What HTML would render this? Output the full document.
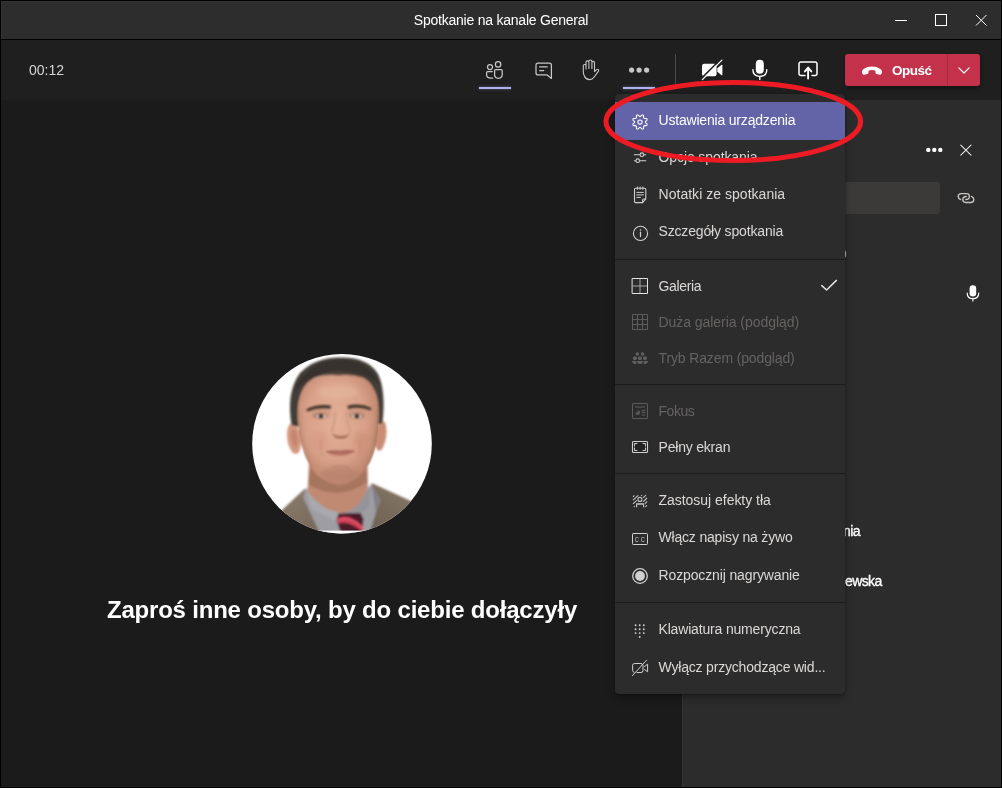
<!DOCTYPE html>
<html lang="pl">
<head>
<meta charset="utf-8">
<title>Spotkanie na kanale General</title>
<style>
*{box-sizing:border-box;margin:0;padding:0}
html,body{width:1002px;height:788px;overflow:hidden;background:#000}
body{font-family:"Liberation Sans",sans-serif;color:#fff;position:relative}
.abs{position:absolute}
#title,#timer,#heading,.mi,.pname,#leave .txt{will-change:transform}
svg{position:absolute;overflow:visible}
#titlebar{left:1px;top:1px;width:1000px;height:38px;background:#2d2d2d;box-shadow:inset 1px 1px 0 #333}
#title{left:0;top:0;width:1000px;height:38px;line-height:38px;text-align:center;font-size:14px;color:#fff;letter-spacing:-0.23px}
#toolbar{left:1px;top:40px;width:1000px;height:60px;background:#1f1f1f}
#main{left:1px;top:100px;width:681px;height:687px;background:#1b1b1b}
#panel{left:682px;top:100px;width:319px;height:687px;background:#2d2c2c;border-left:1px solid #343333}
#timer{left:29px;top:62px;font-size:14px;color:#d6d6d6;line-height:16px}
#heading{left:1px;top:596px;width:682px;text-align:center;font-size:24px;font-weight:bold;line-height:28px;color:#fff;white-space:nowrap;letter-spacing:-0.2px}
.ul{position:absolute;height:2px;top:87px;width:32px;background:#b0b1ea;box-shadow:0 0 3px rgba(150,152,225,.55)}
#vdiv{left:675px;top:54px;width:1px;height:30px;background:#4a4a4a}
#leave{left:845px;top:54px;width:135px;height:32px;background:#c4314b;border-radius:3px;box-shadow:0 2px 4px rgba(0,0,0,.4)}
#leave .split{position:absolute;left:102px;top:0;width:1px;height:32px;background:#a72a40}
#leave .txt{position:absolute;left:47px;top:0;line-height:33px;font-size:13.5px;font-weight:bold;color:#fff;letter-spacing:-0.5px}
#search{left:700px;top:182px;width:240px;height:32px;background:#3b3a39;border-radius:3px}
.pname{position:absolute;font-size:14px;line-height:16px;color:#fff;white-space:nowrap;letter-spacing:-0.6px;-webkit-text-stroke:0.35px #fff}
#menu{left:615px;top:94px;width:230px;height:600px;background:#2d2c2c;border-radius:4px;box-shadow:0 4px 8px -1px rgba(0,0,0,.4),0 0 2px rgba(0,0,0,.35)}
.mi{position:absolute;left:0;width:230px;height:38px;line-height:36px;font-size:14px;color:#dbd9d7;padding-left:43.5px;white-space:nowrap}
.mi.dis{color:#646362}
.mi.sel{background:#6264a7;color:#fff}
.sep{position:absolute;left:0;width:230px;height:1px;background:#1c1c1c}
</style>
</head>
<body>
<div id="titlebar" class="abs"><div id="title" class="abs">Spotkanie na kanale General</div></div>
<div id="toolbar" class="abs"></div>
<div id="main" class="abs"></div>
<div id="panel" class="abs"></div>

<!-- window controls -->
<svg style="left:890px;top:10px" width="105" height="22" viewBox="890 10 105 22" fill="none" stroke="#fff" stroke-width="1">
  <path d="M895 20.5H907"/>
  <rect x="935.5" y="14.5" width="11" height="11"/>
  <path d="M976 15L986.5 25.5M986.5 15L976 25.5"/>
</svg>

<div id="timer" class="abs">00:12</div>


<div id="leave" class="abs"><div class="split"></div><div class="txt">Opuść</div></div>
<!-- toolbar icons -->
<svg style="left:0;top:0" width="1002" height="100" viewBox="0 0 1002 100" fill="none" stroke="#c8c6c4" stroke-width="1.25" stroke-linecap="round" stroke-linejoin="round">
  <!-- people -->
  <circle cx="490" cy="67" r="2.5"/>
  <circle cx="498.1" cy="64.4" r="2.7"/>
  <path d="M492.3 71.6H487.6Q486.6 71.6 486.6 72.6V74.8Q486.6 78.2 491 78.2H492.6"/>
  <path d="M495.6 69.6H501.2Q502.2 69.6 502.2 70.6V74.6Q502.2 78.3 498.4 78.3Q494.6 78.3 494.6 74.6V70.6Q494.6 69.6 495.6 69.6Z"/>
  <!-- chat -->
  <path d="M538 63.2H549.4Q551.4 63.2 551.4 65.2V78.4L547.2 74.9H538Q536 74.9 536 72.9V65.2Q536 63.2 538 63.2Z"/>
  <path d="M539.6 66.9H547.2M539.6 70.6H543.8" stroke-width="1.1"/>
  <!-- hand -->
  <path d="M586 69V62.2Q586 60.9 587.4 60.9Q588.9 60.9 588.9 62.2V68.5M588.9 62V61.2Q588.9 60 590.4 60Q591.9 60 591.9 61.2V68.5M591.9 62.6Q591.9 61.4 593.2 61.4Q594.5 61.4 594.5 62.6V71.6L596.6 69.6Q597.6 68.8 598.5 69.7Q599 70.5 598.3 71.4L594 77.3Q592.3 79.6 589.6 79.6Q586.4 79.6 584.6 76.6Q583.3 74.4 583.3 71.5V65.6Q583.3 64.5 584.6 64.5Q586 64.5 586 65.6" stroke-width="1.1"/>
  <!-- dots -->
  <g fill="#c8c6c4" stroke="none"><circle cx="631.6" cy="70.1" r="2.6"/><circle cx="639.1" cy="70.1" r="2.6"/><circle cx="646.6" cy="70.1" r="2.6"/></g>
  <!-- camera off -->
  <g fill="#fff" stroke="none">
    <rect x="702" y="63.7" width="14.6" height="12.6" rx="2.2"/>
    <path d="M717.3 68.2L721.3 64.9Q722.4 64.2 722.4 65.5V74.5Q722.4 75.8 721.3 75.1L717.3 71.8Z"/>
  </g>
  <path d="M701.3 78.6L720.9 59" stroke="#1f1f1f" stroke-width="1.6" stroke-linecap="butt"/>
  <path d="M702.4 79.6L721.9 60.1" stroke="#fff" stroke-width="1.3"/>
  <!-- mic -->
  <rect x="755.8" y="59.8" width="8" height="14" rx="4" fill="#fff" stroke="none"/>
  <path d="M752.9 69.6Q752.9 76.4 759.8 76.4Q766.8 76.4 766.8 69.6M759.8 76.6V79.4" stroke="#fff" stroke-width="1.4"/>
  <!-- share -->
  <path d="M805 75.4H801Q799 75.4 799 73.4V64Q799 62 801 62H815Q817 62 817 64V73.4Q817 75.4 815 75.4H812" stroke="#fff" stroke-width="1.5"/>
  <path d="M808.1 78.6V68M804.9 71.4L808.1 67.6L811.3 71.4" stroke="#fff" stroke-width="1.9"/>
  <!-- leave: phone + chevron -->
  <path transform="translate(0 0.7)" d="M862 71.6Q861.6 69.4 863.6 68.2Q867 65.8 872 65.8Q877 65.8 880.4 68.2Q882.4 69.4 881.9 71.6L881.5 73Q881.1 74.3 879.8 74L876.6 73.2Q875.5 72.9 875.5 71.8V70Q872 68.8 868.5 70V71.8Q868.5 72.9 867.4 73.2L864.2 74Q862.9 74.3 862.5 73Z" fill="#fff" stroke="none"/>
  <path d="M958.8 67.9L964 73L969.2 67.9" stroke="#fff" stroke-width="1.2"/>
</svg>
<div class="ul" style="left:479px"></div>
<div class="ul" style="left:623px"></div>
<div id="vdiv" class="abs"></div>


<div id="search" class="abs"></div>
<!-- panel icons -->
<svg style="left:0;top:0" width="1002" height="788" viewBox="0 0 1002 788" fill="none" stroke="#fff" stroke-width="1.1" stroke-linecap="round" stroke-linejoin="round">
  <g fill="#fff" stroke="none"><circle cx="928.3" cy="149.9" r="2.2"/><circle cx="934.3" cy="149.9" r="2.2"/><circle cx="940.3" cy="149.9" r="2.2"/></g>
  <path d="M960.8 145.2L971 155.2M971 145.2L960.8 155.2" stroke="#e6e6e6" stroke-width="1.1"/>
  <!-- link -->
  <g stroke="#c8c6c4" stroke-width="1.35">
  <path d="M960.6 199.6Q958.2 198.6 958.2 196.6Q958.2 193.6 961.4 193.6H966.4Q969.4 193.6 969.4 196.4Q969.4 199.4 965.8 199.5"/>
  <path d="M966.2 196.5Q962.8 196.6 962.8 199.6Q962.8 202.5 965.8 202.5H970.8Q973.8 202.5 973.8 199.5Q973.8 197.4 971.4 196.4"/>
  </g>
  <!-- mic -->
  <rect x="969.6" y="285.2" width="6.6" height="11.4" rx="3.3" fill="#fff" stroke="none"/>
  <path d="M967.2 293.2Q967.2 298.6 972.9 298.6Q978.7 298.6 978.7 293.2M972.9 298.8V301" stroke="#fff" stroke-width="1.2"/>
</svg>

<div class="pname" style="left:842.5px;top:245px;font-size:11.5px;color:#c8c6c4;letter-spacing:0;-webkit-text-stroke:0">)</div>
<div class="pname" style="left:842.6px;top:523px">nia</div>
<div class="pname" style="left:845px;top:572.5px">ewska</div>


<!-- avatar -->
<svg style="left:250px;top:352px" width="184" height="184" viewBox="250 352 184 184">
  <defs>
    <clipPath id="avc"><circle cx="342" cy="443.7" r="89.8"/></clipPath>
    <clipPath id="fc"><path d="M298 420Q296 393 308 382Q322 372 340 372.5Q360 372.5 370 382Q380 393 378.5 420Q378 446 370 462Q358 483 340 485Q322 484 310 466Q299 446 298 420Z"/></clipPath>
    <filter id="b1" x="-20%" y="-20%" width="140%" height="140%"><feGaussianBlur stdDeviation="0.9"/></filter>
    <filter id="b2" x="-30%" y="-30%" width="160%" height="160%"><feGaussianBlur stdDeviation="2.6"/></filter>
    <radialGradient id="skin" cx="0.47" cy="0.42" r="0.66">
      <stop offset="0" stop-color="#e3b097"/><stop offset="0.55" stop-color="#d9a189"/><stop offset="1" stop-color="#b27a62"/>
    </radialGradient>
    <linearGradient id="suitL" x1="0" y1="0" x2="1" y2="1"><stop offset="0" stop-color="#908070"/><stop offset="1" stop-color="#6b5f51"/></linearGradient>
    <linearGradient id="suitR" x1="1" y1="0" x2="0" y2="1"><stop offset="0" stop-color="#8a7b69"/><stop offset="1" stop-color="#65594c"/></linearGradient>
    <linearGradient id="tie" x1="0" y1="0" x2="1" y2="0.6"><stop offset="0" stop-color="#8a2431"/><stop offset="0.5" stop-color="#d8485a"/><stop offset="1" stop-color="#7a1e2b"/></linearGradient>
  </defs>
  <circle cx="342" cy="443.7" r="89.8" fill="#fff"/>
  <g clip-path="url(#avc)">
    <g filter="url(#b1)">
      <!-- suit -->
      <path d="M305 488.5L283 509L268 540H350L320 520Z" fill="url(#suitL)"/>
      <path d="M371.5 483L412 501.5L428 540H345L374 515Z" fill="url(#suitR)"/>
      <!-- shirt -->
      <path d="M306 488L303 497L322 538H368L380 500L371 484L352 510H330Z" fill="#9d9da3"/>
      <path d="M306 489L311 509L335 521L342 512L322 500Z" fill="#a8a8ae"/>
      <path d="M371 485L369 507L353 520L344 512L362 499Z" fill="#94949a"/>
      <path d="M372 486L379 500L372 530L376 512Z" fill="#6f7079" opacity="0.7"/>
      <!-- neck -->
      <path d="M309 462L307.5 491Q322 511 342 513Q358 511 368 488L367.5 458Z" fill="#c08a72"/>
      <path d="M310 468Q336 497 366 466L367 482Q340 502 309 485Z" fill="#9c6c57" opacity="0.75"/>
      <!-- tie -->
      <path d="M338.5 513.5L360.5 513L363.5 519L361.5 535H341.5L336.5 520Z" fill="#4e1d29"/>
      <path d="M337 519Q342 515.5 349 517.5Q357 520 363 527L362.5 532Q355 525 347 523Q341 522 338 524Z" fill="#d23f58"/>
      <path d="M338 520.5Q344 517.8 350 519.5Q357 522 362.8 528.5" stroke="#f0687c" stroke-width="1.2" fill="none" opacity="0.8"/>
      <!-- ears -->
      <ellipse cx="294" cy="438.5" rx="6.8" ry="15.5" fill="#d4977f" transform="rotate(-8 294 438.5)"/>
      <ellipse cx="381" cy="436" rx="5.2" ry="15" fill="#c98d75" transform="rotate(8 381 436)"/>
      <ellipse cx="294.5" cy="438" rx="3" ry="9" fill="#b87a63" opacity="0.6" transform="rotate(-8 294 438.5)"/>
      <!-- hair -->
      <path d="M291.5 425Q286 392 300 373Q316 356.5 342 357.5Q368 357.5 378 374Q386 390 382.5 423L377 425Q378 398 370 385Q356 372 338 372Q316 372 306 386Q298 400 299 427Z" fill="#433c37"/>
      <path d="M294 392Q306 360 342 359.5Q370 360 380 386Q366 370 340 371Q312 372 294 392Z" fill="#38322e"/>
      <!-- face -->
      <path d="M298 420Q296 393 308 382Q322 372 340 372.5Q360 372.5 370 382Q380 393 378.5 420Q378 446 370 462Q358 483 340 485Q322 484 310 466Q299 446 298 420Z" fill="url(#skin)"/>
      <path d="M299 400Q300 386 308 380Q322 370 340 371Q360 371 371 381Q378 388 378 400Q374 384 364 378Q350 373.5 338.5 375.5Q326 373.5 313 378Q302 385 299 400Z" fill="#3f3833" opacity="0.9"/>
    </g>
    <g clip-path="url(#fc)"><g filter="url(#b2)">
      <ellipse cx="338" cy="392" rx="20" ry="7" fill="#e8bba3" opacity="0.55"/>
      <ellipse cx="340" cy="474" rx="19" ry="7" fill="#b07c66" opacity="0.55"/>
      <ellipse cx="318" cy="441" rx="9" ry="10" fill="#d89a85" opacity="0.6"/>
      <ellipse cx="362" cy="441" rx="8" ry="10" fill="#cc8d77" opacity="0.6"/>
      <path d="M298 408Q299 450 313 470L306 467Q296 440 296 412Z" fill="#a16e57" opacity="0.75"/>
      <path d="M378.5 408Q378 450 365 470L372 465Q382 440 381 412Z" fill="#93634e" opacity="0.85"/>
      <ellipse cx="321" cy="413" rx="10" ry="5" fill="#b98672" opacity="0.5"/>
      <ellipse cx="357" cy="413" rx="10" ry="5" fill="#b98672" opacity="0.5"/>
    </g></g>
    <g filter="url(#b1)">
      <!-- brows -->
      <path d="M306 409.5Q316 403.5 331 405.5L330.5 408.8Q318 407 307.5 411.5Z" fill="#43342c"/>
      <path d="M347.5 405.8Q360 402.5 371.5 408L370.5 410.5Q360 406 348 409Z" fill="#43342c"/>
      <!-- eyes -->
      <ellipse cx="320.5" cy="416" rx="7" ry="2.6" fill="#8a5e4d" opacity="0.9"/>
      <ellipse cx="357" cy="416" rx="7" ry="2.6" fill="#8a5e4d" opacity="0.9"/>
      <ellipse cx="321" cy="416.3" rx="5.2" ry="1.7" fill="#e9d6cb"/>
      <ellipse cx="321" cy="416.2" rx="2.6" ry="2.1" fill="#3a2a24"/>
      <ellipse cx="356.8" cy="416.3" rx="5.2" ry="1.7" fill="#e9d6cb"/>
      <ellipse cx="356.8" cy="416.2" rx="2.6" ry="2.1" fill="#3a2a24"/>
      <!-- nose -->
      <path d="M332 433Q334 439 340.5 438.5Q347.5 439 350 433Q347 436.5 340.5 436Q335 436.5 332 433Z" fill="#a06853"/>
      <path d="M335.5 412Q333.5 426 332 432" stroke="#c08a74" stroke-width="1.8" fill="none" opacity="0.6"/>
      <path d="M346 412Q348.5 426 350 432" stroke="#c08a74" stroke-width="1.8" fill="none" opacity="0.45"/>
      <!-- mouth -->
      <path d="M326 451.5Q334 449 340 450.5Q347 449 355 451Q348 456 340 456Q332 456 326 451.5Z" fill="#bb7868"/>
      <path d="M326 451.7Q340 453.5 355 451.2" stroke="#8a4f44" stroke-width="1" fill="none"/>
      <path d="M331 468Q340 464.5 350 468" stroke="#b5806c" stroke-width="1.5" fill="none" opacity="0.7"/>
      <path d="M322 440Q319 448 323 456M359 440Q362 448 358 456" stroke="#bd8570" stroke-width="1.3" fill="none" opacity="0.55"/>
    </g>
    <rect x="250" y="530.6" width="184" height="10" fill="#fff"/>
  </g>
</svg>

<div id="heading" class="abs">Zaproś inne osoby, by do ciebie dołączyły</div>

<div id="menu" class="abs">
  <div class="mi sel" style="top:8px;letter-spacing:-0.190px">Ustawienia urządzenia</div>
  <div class="mi" style="top:45px;letter-spacing:-0.100px">Opcje spotkania</div>
  <div class="mi" style="top:82px;letter-spacing:0.030px">Notatki ze spotkania</div>
  <div class="mi" style="top:119px;letter-spacing:-0.160px">Szczegóły spotkania</div>
  <div class="sep" style="top:165px"></div>
  <div class="mi" style="top:174px;letter-spacing:-0.340px">Galeria</div>
  <div class="mi dis" style="top:210px;letter-spacing:-0.050px">Duża galeria (podgląd)</div>
  <div class="mi dis" style="top:246px;letter-spacing:-0.130px">Tryb Razem (podgląd)</div>
  <div class="sep" style="top:290px"></div>
  <div class="mi dis" style="top:299px;letter-spacing:-0.480px">Fokus</div>
  <div class="mi" style="top:335px;letter-spacing:-0.200px">Pełny ekran</div>
  <div class="sep" style="top:379px"></div>
  <div class="mi" style="top:388px;letter-spacing:-0.030px">Zastosuj efekty tła</div>
  <div class="mi" style="top:425px;letter-spacing:-0.185px">Włącz napisy na żywo</div>
  <div class="mi" style="top:463px;letter-spacing:-0.130px">Rozpocznij nagrywanie</div>
  <div class="sep" style="top:508px"></div>
  <div class="mi" style="top:517px;letter-spacing:-0.170px">Klawiatura numeryczna</div>
  <div class="mi" style="top:555px;letter-spacing:-0.185px">Wyłącz przychodzące wid...</div>
</div>


<!-- menu icons -->
<svg style="left:0;top:0" width="1002" height="788" viewBox="0 0 1002 788" fill="none" stroke="#d2d0ce" stroke-width="1.1" stroke-linecap="round" stroke-linejoin="round">
  <!-- gear -->
  <path d="M645.5 122.0L645.5 122.4L645.8 122.8L646.4 123.3L647.0 123.9L647.1 124.4L647.0 124.9L646.8 125.3L646.3 125.6L645.4 125.6L644.6 125.6L644.2 125.7L643.9 125.9L643.7 126.2L643.6 126.6L643.6 127.4L643.6 128.3L643.3 128.8L642.9 129.0L642.4 129.1L641.9 129.0L641.3 128.4L640.8 127.8L640.4 127.5L640.0 127.5L639.6 127.5L639.2 127.8L638.7 128.4L638.1 129.0L637.6 129.1L637.1 129.0L636.7 128.8L636.4 128.3L636.4 127.4L636.4 126.6L636.3 126.2L636.1 125.9L635.8 125.7L635.4 125.6L634.6 125.6L633.7 125.6L633.2 125.3L633.0 124.9L632.9 124.4L633.0 123.9L633.6 123.3L634.2 122.8L634.5 122.4L634.5 122.0L634.5 121.6L634.2 121.2L633.6 120.7L633.0 120.1L632.9 119.6L633.0 119.1L633.2 118.7L633.7 118.4L634.6 118.4L635.4 118.4L635.8 118.3L636.1 118.1L636.3 117.8L636.4 117.4L636.4 116.6L636.4 115.7L636.7 115.2L637.1 115.0L637.6 114.9L638.1 115.0L638.7 115.6L639.2 116.2L639.6 116.5L640.0 116.5L640.4 116.5L640.8 116.2L641.3 115.6L641.9 115.0L642.4 114.9L642.9 115.0L643.3 115.2L643.6 115.7L643.6 116.6L643.6 117.4L643.7 117.8L643.9 118.1L644.2 118.3L644.6 118.4L645.4 118.4L646.3 118.4L646.8 118.7L647.0 119.1L647.1 119.6L647.0 120.1L646.4 120.7L645.8 121.2L645.5 121.6Z" stroke="#fff" stroke-width="1.05"/>
  <circle cx="640" cy="122" r="2.1" stroke="#fff" stroke-width="1.05"/>
  <!-- options sliders -->
  <path d="M634.4 154.7H639.8M644 154.7H645.8M634.4 160.7H635.6M639.8 160.7H645.8"/>
  <circle cx="641.9" cy="154.7" r="1.8"/><circle cx="637.7" cy="160.7" r="1.8"/>
  <!-- notes -->
  <path d="M635.6 188.2H644.6Q645.8 188.2 645.8 189.4V199L642.6 202.6H635.6Q634.5 202.6 634.5 201.4V189.4Q634.5 188.2 635.6 188.2ZM645.6 199H643.6Q642.6 199 642.6 200V202.4"/>
  <path d="M637.4 186.9V189.3M640.1 186.9V189.3M642.8 186.9V189.3" stroke-width="1"/>
  <path d="M636.8 192.4H643.4M636.8 194.9H643.4M636.8 197.4H640.4" stroke-width="1"/>
  <!-- info -->
  <circle cx="640.5" cy="233.4" r="7.1"/>
  <path d="M640.5 232.2V236.6" stroke-width="1.2"/><circle cx="640.5" cy="230" r="0.8" fill="#d2d0ce" stroke="none"/>
  <!-- gallery -->
  <rect x="632.5" y="278.5" width="15" height="15" stroke="#e4e2e0" stroke-width="1"/>
  <path d="M640 279V293M633 286H647" stroke="#a8a6a4" stroke-width="1" stroke-linecap="butt"/>
  <!-- check -->
  <path d="M821.8 285.6L826.6 290L836.4 280.4" stroke="#e4e2e0" stroke-width="1.5"/>
  <!-- large gallery -->
  <g stroke="#5e5c5a" stroke-width="1" stroke-linecap="butt">
  <rect x="632.5" y="314.5" width="15" height="15"/>
  <path d="M637.5 315V329M642.5 315V329M633 319.5H647M633 324.5H647"/>
  </g>
  <!-- together -->
  <g fill="#62605e" stroke="none">
    <circle cx="637.3" cy="354" r="1.75"/><circle cx="642.5" cy="354" r="1.75"/>
    <circle cx="634.9" cy="358.2" r="1.95"/><circle cx="639.9" cy="358.2" r="1.95"/><circle cx="645" cy="358.2" r="1.95"/>
    <path d="M632 361H636.3V364H634.6Q632 363.6 632 361Z"/>
    <path d="M637.1 361H642.9Q642.9 364 640 364Q637.1 364 637.1 361Z"/>
    <path d="M648 361H643.7V364H645.4Q648 363.6 648 361Z"/>
  </g>
  <!-- fokus -->
  <g stroke="#5e5c5a" stroke-width="1" stroke-linecap="butt">
  <rect x="632.5" y="403.5" width="15" height="15" rx="0.5"/>
  <path d="M635 407H645M641.8 410.5H645.4M641.8 412.5H645.4M641.8 415H645.4"/>
  <path d="M637.6 410.2A2.4 2.4 0 1 1 635.2 412.6H637.6Z" fill="#5e5c5a" stroke="none"/>
  </g>
  <!-- fullscreen -->
  <rect x="632.5" y="441.5" width="15" height="11" rx="1" stroke-width="1.1" fill="#242323"/>
  <path d="M634.5 446.4V443.5H637.4M642.6 443.5H645.5V446.4M645.5 447.6V450.5H642.6M637.4 450.5H634.5V447.6" stroke-width="1" stroke-linecap="butt" stroke-linejoin="miter"/>
  <!-- effects -->
  <g stroke-width="1.1" stroke-linecap="butt" stroke="#c4c2c0">
  <path d="M633 496.9L634.4 495.3M633 500.2L638.3 495.3M633 503.9L636.8 500.4M633.9 506.8L634.7 506M641.2 495.9L642 495.1M643.1 497.8L646 495.2M643.1 501.8L647 498M645 504L647 501.4M645.4 506.9L647 505.3"/>
  <circle cx="639.9" cy="499.4" r="2"/>
  <path d="M636.6 507.3V503.8H643.6V507.3" stroke-width="1.2"/>
  <path d="M636.6 504H643.6" stroke-width="1.6" stroke="#a8a6a4"/>
  </g>
  <!-- cc -->
  <rect x="632.5" y="533.5" width="15" height="11" rx="0.8" stroke-width="1"/>
  <!-- record -->
  <circle cx="640" cy="576" r="7.3" stroke-width="1.3"/>
  <circle cx="640" cy="576" r="4.9" fill="#d2d0ce" stroke="none"/>
  <!-- dialpad -->
  <g fill="#d2d0ce" stroke="none">
    <circle cx="635.6" cy="625.3" r="0.95"/><circle cx="639.7" cy="625.3" r="0.95"/><circle cx="643.8" cy="625.3" r="0.95"/>
    <circle cx="635.6" cy="629.2" r="0.95"/><circle cx="639.7" cy="629.2" r="0.95"/><circle cx="643.8" cy="629.2" r="0.95"/>
    <circle cx="635.6" cy="633.1" r="0.95"/><circle cx="639.7" cy="633.1" r="0.95"/><circle cx="643.8" cy="633.1" r="0.95"/>
    <circle cx="639.7" cy="637" r="0.95"/>
  </g>
  <!-- video off -->
  <path d="M641 663.5Q643 663.5 643 665.5V670.5Q643 672.5 641 672.5H637M634 672.3Q632.6 671.8 632.6 670.5V665.5Q632.6 663.5 634.6 663.5H641" stroke-width="1"/>
  <path d="M644.6 666.4L647.6 664.2V671.8L644.6 669.6" stroke-width="1"/>
  <path d="M632.4 675.6L646.6 660.2" stroke-width="1"/>
  <text transform="translate(634.65 541.9) scale(0.7 1)" x="0" y="0" font-family="Liberation Sans, sans-serif" font-size="8" fill="#d2d0ce" stroke="none" letter-spacing="2.9">CC</text>
</svg>

<!-- annotation ellipse -->
<svg style="left:0;top:0" width="1002" height="788" viewBox="0 0 1002 788" fill="none">
  <ellipse cx="733.25" cy="121.5" rx="127.35" ry="39" stroke="#ed1c24" stroke-width="5"/>
</svg>
</body>
</html>
